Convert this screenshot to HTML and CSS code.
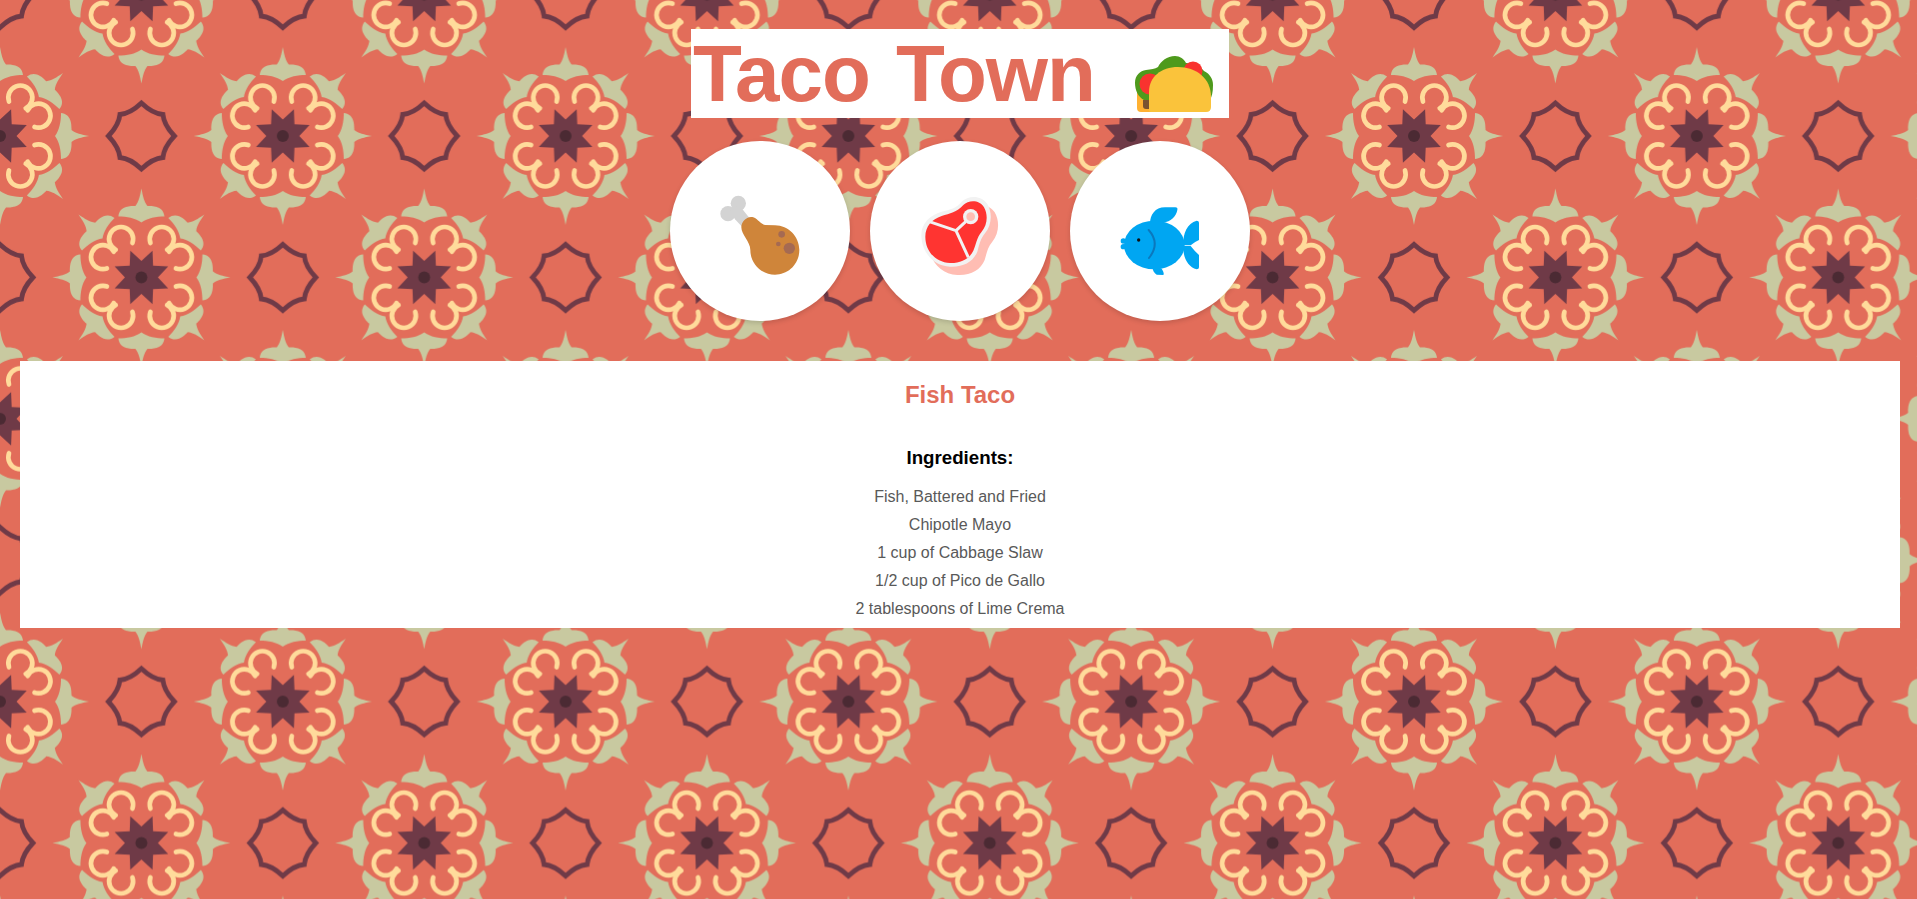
FILE: index.html
```html
<!DOCTYPE html>
<html lang="en">
<head>
<meta charset="utf-8">
<title>Taco Town</title>
<link rel="stylesheet" href="styles.css">
</head>
<body>
<svg class="backdrop" aria-hidden="true">
  <defs>
    <g id="petal"><path d="M0,-89 C-1.5,-81 -2.5,-76 -6,-71.5 C-10,-71.5 -22,-72 -23,-61 C-15,-61 -6,-59.5 0,-55 C6,-59.5 15,-61 23,-61 C22,-72 10,-71.5 6,-71.5 C2.5,-76 1.5,-81 0,-89Z"/></g>
    <g id="arcs" fill="none" stroke="#ffdb9b" stroke-width="4.7" stroke-linecap="round">
      <path d="M9,-34.5 A12,12 0 1 1 25.7,-27.7"/>
      <path d="M34.5,-9 A12,12 0 1 0 27.7,-25.7"/>
    </g>
    <g id="flower">
      <g fill="#c8c9a0">
        <use href="#petal"/>
        <use href="#petal" transform="rotate(45)"/>
        <use href="#petal" transform="rotate(90)"/>
        <use href="#petal" transform="rotate(135)"/>
        <use href="#petal" transform="rotate(180)"/>
        <use href="#petal" transform="rotate(225)"/>
        <use href="#petal" transform="rotate(270)"/>
        <use href="#petal" transform="rotate(315)"/>
      </g>
      <use href="#arcs"/>
      <use href="#arcs" transform="scale(-1,1)"/>
      <use href="#arcs" transform="scale(1,-1)"/>
      <use href="#arcs" transform="scale(-1,-1)"/>
      <polygon fill="#6f3a47" points="0,-16.5 11.1,-26.8 11.7,-11.7 26.8,-11.1 16.5,0 26.8,11.1 11.7,11.7 11.1,26.8 0,16.5 -11.1,26.8 -11.7,11.7 -26.8,11.1 -16.5,0 -26.8,-11.1 -11.7,-11.7 -11.1,-26.8"/>
      <circle r="6" fill="#4b2a33"/>
    </g>
    <path id="frame" fill="none" stroke="#6f3a47" stroke-width="4.8" stroke-miterlimit="10" d="M0,-33 Q11,-22.5 21.5,-21.5 Q22.5,-11 33,0 Q22.5,11 21.5,21.5 Q11,22.5 0,33 Q-11,22.5 -21.5,21.5 Q-22.5,11 -33,0 Q-22.5,-11 -21.5,-21.5 Q-11,-22.5 0,-33Z"/>
    <pattern id="tile" width="282.8" height="282.8" patternUnits="userSpaceOnUse" patternTransform="translate(0,136)">
      <use href="#flower" x="0" y="0"/>
      <use href="#flower" x="282.8" y="0"/>
      <use href="#flower" x="0" y="282.8"/>
      <use href="#flower" x="282.8" y="282.8"/>
      <use href="#flower" x="141.4" y="141.4"/>
      <use href="#frame" x="141.4" y="0"/>
      <use href="#frame" x="141.4" y="282.8"/>
      <use href="#frame" x="0" y="141.4"/>
      <use href="#frame" x="282.8" y="141.4"/>
    </pattern>
  </defs>
  <rect class="backdrop-fill" width="100%" height="100%" fill="url(#tile)"/>
</svg>

<main class="page">
  <h1 class="title">
    <span class="title-text">Taco Town</span>
    <svg class="title-icon" viewBox="0 -21 90 89" aria-hidden="true">
      <path fill="#ffb132" d="M7,38 H30 V62 H11 Q7,62 7,58Z"/>
      <path fill="#4e9a1c" d="M5,33 C5,25 10,21 16,20 C21,19 25,19 28,17 C31,11 37,6 45,6 C50,6 54,9 56,13 C63,13 71,17 74,21 C80,24 83,29 83,35 C83,42 82,47 79,52 L14,50 C8,47 5,40 5,33Z"/>
      <circle cx="63" cy="21" r="9.5" fill="#f9332f"/>
      <circle cx="20" cy="34" r="10.5" fill="#f9332f"/>
      <path fill="#7a5230" d="M13,50 H22 V59 H16 Q13,59 13,56Z"/>
      <path fill="#fac33b" d="M19,60 V42 C19,27 31,17 48,17 C66,17 81,28 81,47 V57 Q81,62 76,62 H21 Q19,62 19,60Z"/>
    </svg>
  </h1>

  <nav class="choices">
    <button class="choice" type="button" aria-label="Chicken">
      <svg class="choice-icon" viewBox="0 3 360 360" aria-hidden="true">
        <g fill="#d3d3d3">
          <circle cx="115" cy="100" r="23"/>
          <circle cx="84" cy="131" r="23"/>
          <path d="M100,105 L125,115 L165,165 L140,185 L105,148 L90,125Z"/>
        </g>
        <path fill="#cf853a" d="M124,172 C124,155 140,138 157,141 C172,144 178,160 195,165 L225,166 C265,166 298,200 298,240 C298,282 265,314 225,314 C185,314 151,282 151,240 C151,215 124,195 124,172Z"/>
        <g fill="#a56a52">
          <circle cx="245" cy="193" r="10"/>
          <circle cx="235" cy="222" r="7"/>
          <circle cx="268" cy="235" r="17"/>
        </g>
      </svg>
    </button>
    <button class="choice" type="button" aria-label="Beef">
      <svg class="choice-icon" viewBox="0 -27 360 360" aria-hidden="true">
        <path fill="#ffbdb3" transform="translate(22,25)" d="M64,165 C64,130 90,105 125,95 C150,88 170,85 185,65 C205,45 245,45 262,72 C278,100 275,135 255,160 C240,178 238,195 232,215 C220,245 190,262 150,260 C100,258 64,215 64,165Z"/>
        <path fill="#f2f2f2" d="M64,165 C64,130 90,105 125,95 C150,88 170,85 185,65 C205,45 245,45 262,72 C278,100 275,135 255,160 C240,178 238,195 232,215 C220,245 190,262 150,260 C100,258 64,215 64,165Z"/>
        <path fill="#ff3431" d="M76,170 C76,140 95,118 125,108 C150,100 170,97 190,75 C205,60 238,58 252,82 C265,105 262,135 245,155 C230,172 228,195 220,212 C208,238 180,250 150,249 C105,247 76,212 76,170Z"/>
        <path fill="none" stroke="#f2f2f2" stroke-width="9" d="M88,125 L168,152 L205,232 M168,152 L197,125"/>
        <circle cx="212" cy="110" r="23" fill="#f2f2f2"/>
        <circle cx="212" cy="110" r="13" fill="#ffbdb3"/>
      </svg>
    </button>
    <button class="choice" type="button" aria-label="Fish">
      <svg class="choice-icon" viewBox="0 -57 360 360" aria-hidden="true">
        <g fill="#00a6f2">
          <path d="M150,100 C150,75 165,52 195,52 L226,52 Q234,52 232,60 C228,80 212,95 190,98Z"/>
          <ellipse cx="163" cy="165" rx="91" ry="73"/>
          <circle cx="70" cy="153" r="8"/>
          <circle cx="70" cy="170" r="8"/>
          <path d="M250,165 C248,130 262,100 290,92 Q297,92 297,98 V150 Q285,155 272,166Z"/>
          <path d="M250,167 C248,200 262,230 290,238 Q297,238 297,232 V195 Q285,185 272,168Z"/>
          <path d="M158,233 L185,236 Q194,250 190,255 L170,254 Q158,245 158,233Z"/>
        </g>
        <circle cx="116" cy="150" r="5" fill="#111"/>
        <path fill="none" stroke="#0b78bd" stroke-width="6" stroke-linecap="round" d="M146,120 Q182,160 147,204"/>
      </svg>
    </button>
  </nav>

  <section class="recipe">
    <h2 class="recipe-name">Fish Taco</h2>
    <h3 class="recipe-label">Ingredients:</h3>
    <ul class="ingredients">
      <li>Fish, Battered and Fried</li>
      <li>Chipotle Mayo</li>
      <li>1 cup of Cabbage Slaw</li>
      <li>1/2 cup of Pico de Gallo</li>
      <li>2 tablespoons of Lime Crema</li>
    </ul>
  </section>
</main>
</body>
</html>
```

FILE: styles.css
```css
html {
  overflow: hidden;
  height: 100%;
}

body {
  margin: 0;
  height: 100%;
  font-family: "Liberation Sans", Arial, sans-serif;
  font-size: 16px;
  color: #595959;
  background: #e26d5a;
}

.backdrop {
  position: fixed;
  top: 0;
  left: 0;
  width: 100%;
  height: 100%;
  z-index: -1;
}

.page {
  width: 1920px;
  padding-top: 29px;
  display: flex;
  flex-direction: column;
  align-items: center;
}

.title {
  margin: 0;
  width: 538px;
  height: 89px;
  padding: 0 9px 0 2px;
  box-sizing: border-box;
  background: #fff;
  color: #e26d5a;
  font-size: 80px;
  font-weight: 700;
  line-height: 89px;
  letter-spacing: -1px;
  word-spacing: 5px;
  display: flex;
  justify-content: space-between;
  align-items: center;
}

.title-text {
  white-space: nowrap;
}

.title-icon {
  width: 90px;
  height: 89px;
  flex: none;
}

.choices {
  margin-top: 23px;
  display: flex;
  gap: 20px;
}

.choice {
  width: 180px;
  height: 180px;
  padding: 0;
  border: 0;
  border-radius: 50%;
  background: #fff;
  box-shadow: 0 2px 5px rgba(0, 0, 0, 0.15);
  display: flex;
  align-items: center;
  justify-content: center;
}

.choice-icon {
  width: 120px;
  height: 120px;
}

.recipe {
  margin-top: 40px;
  width: 1880px;
  height: 267px;
  box-sizing: border-box;
  padding-top: 20px;
  background: #fff;
  text-align: center;
}

.recipe-name {
  margin: 0;
  color: #e26d5a;
  font-size: 24px;
  line-height: 28px;
  font-weight: 700;
}

.recipe-label {
  margin: 38px 0 0;
  color: #000;
  font-size: 18.72px;
  line-height: 22px;
  font-weight: 700;
}

.ingredients {
  margin: 14px 0 0;
  padding: 0;
  list-style: none;
  line-height: 28px;
}
```
